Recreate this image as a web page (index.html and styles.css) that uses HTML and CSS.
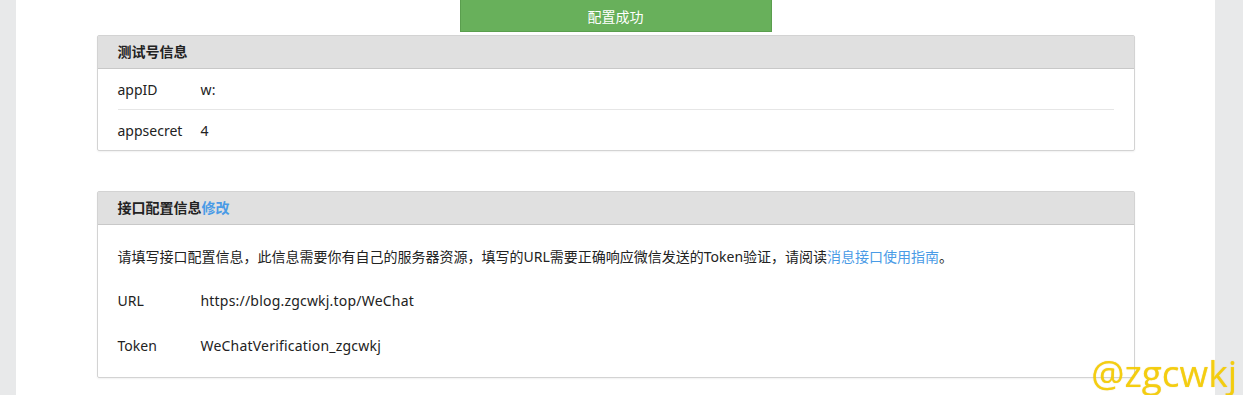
FILE: index.html
```html
<!DOCTYPE html>
<html lang="zh-CN">
<head>
    <meta charset="UTF-8">
    <meta name="viewport" content="width=device-width, initial-scale=1.0">
    <title>测试号管理</title>
    <link rel="stylesheet" href="styles.css">
</head>
<body>
    <div class="page">
        <div class="actions">
            <a class="btn-success" href="#">配置成功</a>
        </div>

        <div class="panel">
            <div class="panel-head">测试号信息</div>
            <div class="panel-body info-list">
                <div class="info-row">
                    <span class="info-label">appID</span>
                    <span class="info-value">w:</span>
                </div>
                <div class="info-row">
                    <span class="info-label">appsecret</span>
                    <span class="info-value">4</span>
                </div>
            </div>
        </div>

        <div class="panel">
            <div class="panel-head">接口配置信息<a href="#" class="link">修改</a></div>
            <div class="panel-body config-list">
                <div class="config-row">请填写接口配置信息，此信息需要你有自己的服务器资源，填写的URL需要正确响应微信发送的Token验证，请阅读<a href="#" class="link">消息接口使用指南</a>。</div>
                <div class="config-row">
                    <span class="info-label">URL</span>
                    <span class="info-value">https://blog.zgcwkj.top/WeChat</span>
                </div>
                <div class="config-row">
                    <span class="info-label">Token</span>
                    <span class="info-value">WeChatVerification_zgcwkj</span>
                </div>
            </div>
        </div>
    </div>

    <div class="watermark">@zgcwkj</div>
</body>
</html>
```

FILE: styles.css
```css
:root {
    --side-gray: #e8e9ea;
    --panel-border: #d3d3d3;
    --head-bg: #e0e0e0;
    --head-line: #c8c8c8;
    --row-line: #e6e6e6;
    --text: #222222;
    --link: #4a9be6;
    --green: #68b05b;
}

body {
    margin: 0;
    background: var(--side-gray);
    font-family: "Noto Sans", "Noto Sans CJK SC", sans-serif;
    font-size: 14px;
    color: var(--text);
    overflow: hidden;
}

.page {
    margin: 0 28px 0 16px;
    min-height: 100vh;
    background: #ffffff;
    display: flex;
    flex-direction: column;
    align-items: center;
}

.actions {
    display: flex;
    justify-content: center;
    margin-bottom: 3px;
}

.btn-success {
    display: block;
    width: 310px;
    height: 31px;
    line-height: 33px;
    text-align: center;
    color: #ffffff;
    background: var(--green);
    border: 1px solid #5a9e4e;
    border-top: 0;
    text-decoration: none;
}

.panel {
    width: 1036px;
    border: 1px solid var(--panel-border);
    border-radius: 2px;
    box-shadow: 0 1px 2px rgba(0, 0, 0, 0.06);
    margin-bottom: 40px;
}

.panel:last-child {
    margin-bottom: 0;
}

.panel-head {
    height: 32px;
    line-height: 32px;
    padding: 0 20px;
    background: var(--head-bg);
    border-bottom: 1px solid var(--head-line);
    font-weight: bold;
}

.link {
    color: var(--link);
    text-decoration: none;
}

.panel-body {
    padding: 0 20px;
}

.info-row {
    display: flex;
    height: 40px;
    align-items: center;
}

.info-row + .info-row {
    border-top: 1px solid var(--row-line);
}

.info-label {
    width: 83px;
    flex-shrink: 0;
}

.info-value {
    letter-spacing: 0.2px;
}

.config-list {
    padding: 8px 20px 9px;
}

.config-row {
    display: flex;
    align-items: center;
    height: 45px;
}

.watermark {
    position: fixed;
    right: 6px;
    bottom: 2px;
    font-family: "Open Sans", sans-serif;
    font-size: 37px;
    line-height: 40px;
    color: rgba(246, 206, 0, 0.85);
    text-shadow: 0 0 1px rgba(220, 170, 0, 0.6);
}
```
